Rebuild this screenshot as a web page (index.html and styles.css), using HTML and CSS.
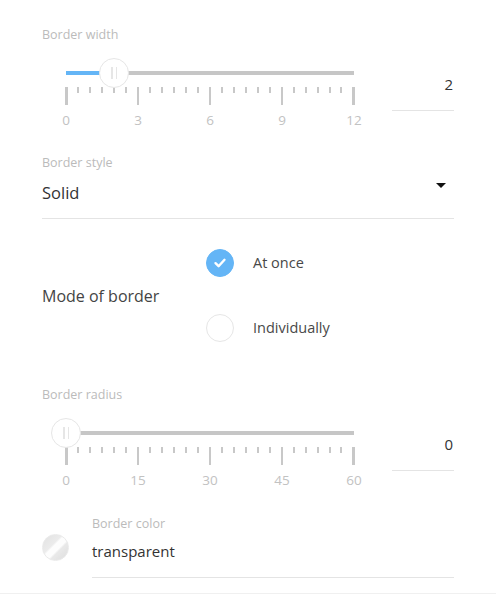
FILE: index.html
```html
<!DOCTYPE html>
<html>
<head>
<meta charset="utf-8">
<link rel="stylesheet" href="styles.css">
</head>
<body>
<div class="panel">
  <div class="field-label">Border width</div>
  <div class="slider-row">
    <div class="slider">
      <div class="track-area">
        <div class="track"><div class="fill" style="width: 16.7%"></div></div>
        <div class="thumb" style="left: 16.7%"><span></span><span></span></div>
      </div>
      <div class="ticks">
        <i class="major"></i><i></i><i></i><i></i><i></i><i></i>
        <i class="major"></i><i></i><i></i><i></i><i></i><i></i>
        <i class="major"></i><i></i><i></i><i></i><i></i><i></i>
        <i class="major"></i><i></i><i></i><i></i><i></i><i></i>
        <i class="major"></i>
      </div>
      <div class="tick-labels"><span>0</span><span>3</span><span>6</span><span>9</span><span>12</span></div>
    </div>
    <div class="value">2</div>
  </div>

  <div class="field-label style-label">Border style</div>
  <div class="select">
    <span>Solid</span>
    <span class="caret"></span>
  </div>

  <div class="mode-row">
    <div class="mode-label">Mode of border</div>
    <div class="radios">
      <div class="radio-item">
        <span class="radio checked">
          <svg width="14" height="14" viewBox="0 0 14 14"><path d="M2.5 7.2 L5.6 10.2 L11.5 3.8" fill="none" stroke="#fff" stroke-width="2.4" stroke-linecap="round" stroke-linejoin="round"/></svg>
        </span>
        <span class="radio-text">At once</span>
      </div>
      <div class="radio-item">
        <span class="radio"></span>
        <span class="radio-text">Individually</span>
      </div>
    </div>
  </div>

  <div class="field-label radius-label">Border radius</div>
  <div class="slider-row">
    <div class="slider">
      <div class="track-area">
        <div class="track"></div>
        <div class="thumb" style="left: 0%"><span></span><span></span></div>
      </div>
      <div class="ticks">
        <i class="major"></i><i></i><i></i><i></i><i></i><i></i>
        <i class="major"></i><i></i><i></i><i></i><i></i><i></i>
        <i class="major"></i><i></i><i></i><i></i><i></i><i></i>
        <i class="major"></i><i></i><i></i><i></i><i></i><i></i>
        <i class="major"></i>
      </div>
      <div class="tick-labels"><span>0</span><span>15</span><span>30</span><span>45</span><span>60</span></div>
    </div>
    <div class="value">0</div>
  </div>

  <div class="color-row">
    <div class="swatch"></div>
    <div class="color-field">
      <div class="field-label">Border color</div>
      <div class="color-value">transparent</div>
    </div>
  </div>
</div>
<div class="footer-line"></div>
</body>
</html>
```

FILE: styles.css
```css
html, body {
  margin: 0;
  padding: 0;
  background: #fff;
}
body {
  font-family: "Open Sans", "Lato", sans-serif;
  color: #333;
  width: 498px;
}
.panel {
  padding: 27px 44px 0 42px;
}
.field-label {
  font-size: 12.5px;
  line-height: 16px;
  color: #bbbbbb;
}
.slider-row {
  display: flex;
  margin-top: 14px;
}
.slider {
  margin-left: 24px;
  width: 288px;
}
.track-area {
  position: relative;
  height: 30px;
}
.track {
  position: relative;
  top: 14px;
  height: 4px;
  background: #c6c6c6;
}
.fill {
  height: 4px;
  background: #64b5f6;
}
.thumb {
  position: absolute;
  top: 1px;
  width: 28px;
  height: 28px;
  margin-left: -15px;
  border: 1px solid #e6e6e6;
  border-radius: 50%;
  background: #fff;
  display: flex;
  justify-content: center;
  align-items: center;
  gap: 3px;
}
.thumb span {
  width: 1.5px;
  height: 12px;
  background: #e6e6e6;
}
.ticks {
  display: flex;
  justify-content: space-between;
  align-items: flex-start;
  width: 290px;
  margin-left: -1px;
  height: 18px;
}
.ticks i {
  display: block;
  width: 2px;
  height: 6px;
  background: #c8c8c8;
}
.ticks i.major {
  height: 18px;
  width: 2.5px;
}
.tick-labels {
  display: flex;
  justify-content: space-between;
  margin-top: 7px;
  font-size: 13.5px;
  line-height: 16px;
  color: #c2c2c2;
}
.tick-labels span {
  width: 0;
  display: flex;
  justify-content: center;
  white-space: nowrap;
}
.value {
  margin-left: 38px;
  width: 62px;
  margin-top: 17px;
  height: 20px;
  padding-bottom: 16px;
  border-bottom: 1px solid #e4e4e4;
  text-align: right;
  font-size: 15px;
  line-height: 20px;
  color: #333;
  box-sizing: content-box;
  padding-right: 1px;
}
.style-label {
  margin-top: 27px;
}
.select {
  margin-top: 12px;
  display: flex;
  justify-content: space-between;
  align-items: flex-start;
  font-size: 16.5px;
  line-height: 20px;
  color: #333;
  padding-bottom: 15px;
  border-bottom: 1px solid #e4e4e4;
}
.caret {
  margin-top: 0px;
  margin-right: 8px;
  width: 0;
  height: 0;
  border-left: 5px solid transparent;
  border-right: 5px solid transparent;
  border-top: 5px solid #111;
}
.mode-row {
  display: flex;
  align-items: center;
  margin-top: 30px;
}
.mode-label {
  width: 164px;
  font-size: 16px;
  line-height: 20px;
  color: #444;
}
.radios {
  display: flex;
  flex-direction: column;
  gap: 37px;
}
.radio-item {
  display: flex;
  align-items: center;
  height: 28px;
}
.radio {
  width: 26px;
  height: 26px;
  border: 1px solid #e6e6e6;
  border-radius: 50%;
  background: #fff;
  display: flex;
  align-items: center;
  justify-content: center;
}
.radio.checked {
  background: #64b5f6;
  border-color: #64b5f6;
}
.radio-text {
  margin-left: 19px;
  font-size: 14.5px;
  line-height: 20px;
  color: #484848;
}
.radius-label {
  margin-top: 45px;
}
.color-row {
  display: flex;
  align-items: center;
  margin-top: 28px;
  margin-bottom: 15px;
}
.swatch {
  width: 25px;
  height: 25px;
  border-radius: 50%;
  border: 1px solid #eaeaea;
  background: linear-gradient(135deg, #e2e2e2 0%, #ebebeb 38%, #fdfdfd 44%, #fdfdfd 58%, #e9e9e9 64%, #dddddd 100%);
}
.color-field {
  flex: 1;
  margin-left: 23px;
  padding-bottom: 16px;
  border-bottom: 1px solid #e4e4e4;
}
.color-value {
  margin-top: 9px;
  font-size: 15px;
  line-height: 20px;
  color: #333;
}
.footer-line {
  width: 496px;
  border-top: 1px solid #f0f0f0;
}
```
